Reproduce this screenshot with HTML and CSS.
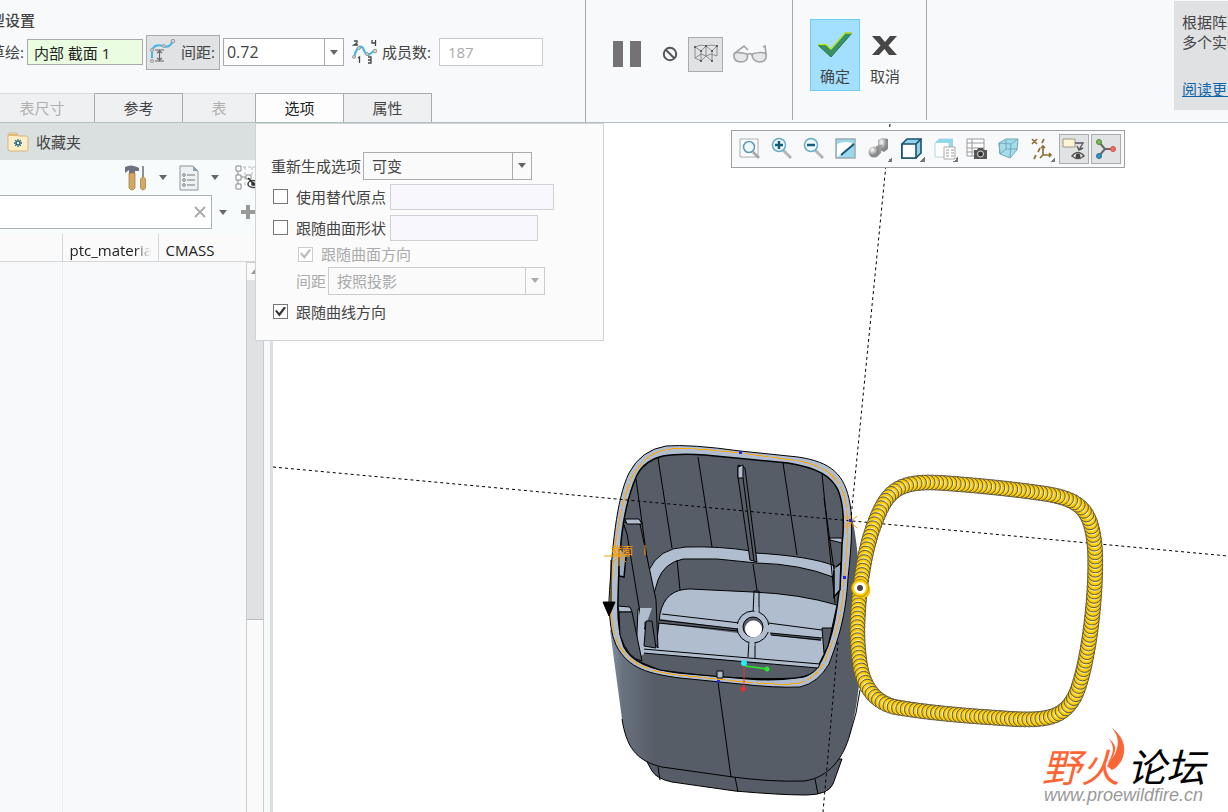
FILE: index.html
```html
<!DOCTYPE html>
<html lang="zh-CN">
<head>
<meta charset="utf-8">
<title>阵列</title>
<link rel="stylesheet" href="styles.css">
</head>
<body>
<header class="ribbon">
  <section class="group settings">
    <h2 class="settings-title">型设置</h2>
    <div class="settings-row">
      <label class="clipped" for="sketch">草绘:</label>
      <input class="field sketch" id="sketch" value="内部 截面 1">
      <button class="spacing-toggle" type="button">
        <svg class="icon" viewBox="0 0 26 26"><path d="M2 19V12Q4 4 13 7Q19 10 23 2" fill="none" stroke="#45b5e8" stroke-width="2"/><g fill="#d5d8da" stroke="#999"><circle cx="2" cy="11" r="1.5"/><circle cx="2" cy="22" r="1.5"/><circle cx="14" cy="7" r="1.5"/><circle cx="23" cy="2" r="1.8"/></g><path d="M5 11H14M5 22H14M9.500 12V21M7 14l2.500-2L12 14M7 19l2.500 2L12 19" fill="none" stroke="#666" stroke-width="1.200"/></svg>
        <span>间距:</span>
      </button>
      <span class="combo spacing-combo"><input class="combo-control" aria-label="间距" value="0.72"><span class="combo-arrow"></span></span>
      <svg class="icon members-icon" viewBox="0 0 26 26"><path d="M2 18Q6 4 11 9Q14 18 18 15L23 11" fill="none" stroke="#45b5e8" stroke-width="2.200"/><g fill="#d5d8da" stroke="#999"><circle cx="2" cy="18" r="1.500"/><circle cx="7" cy="9" r="1.500"/><circle cx="15" cy="15" r="1.500"/><circle cx="23" cy="12" r="1.800"/></g><path d="M2 2h3v2L2 6h4M20 1v3h4M23.500 1v6M6 19l1.500-1v6M16 18h3v6h-3M16 21h3" fill="none" stroke="#444" stroke-width="1.300"/></svg>
      <label for="count">成员数:</label>
      <input class="field count" id="count" value="187" disabled>
    </div>
    <nav class="tabs">
      <button class="tab tab-first" type="button" disabled>表尺寸</button>
      <button class="tab tab-wide" type="button">参考</button>
      <button class="tab tab-short" type="button" disabled>表</button>
      <button class="tab tab-wide tab-active" type="button">选项</button>
      <button class="tab tab-wide" type="button">属性</button>
    </nav>
  </section>
  <section class="group preview">
    <button class="plain" type="button" aria-label="暂停"><svg width="30" height="28" viewBox="0 0 30 28"><path d="M1 1h10v26H1zM18 1h11v26H18z" fill="#747276"/></svg></button>
    <button class="plain no-preview" type="button" aria-label="无预览"><svg width="16" height="16" viewBox="0 0 16 16"><circle cx="8" cy="8" r="6.200" fill="none" stroke="#555" stroke-width="2"/><path d="M4 4l8 8" stroke="#555" stroke-width="2"/></svg></button>
    <button class="pressed" type="button" aria-label="特征预览"><svg width="26" height="22" viewBox="0 0 26 22"><path d="M2 4L8 2L13 3L8 8L2 4V15L8 18V8M13 3L18 2L24 3L19 8L13 3V13L19 18V8M24 3V13M2 15L8 11L13 13L8 18M13 13L18 11L24 13" fill="none" stroke="#777a7c" stroke-width="0.800"/><path d="M1 4h2M12 3h2M23 3h2M7 18h2M18 18h2M7 8h2M18 8h2" stroke="#444" stroke-width="1.500"/></svg></button>
    <button class="plain" type="button" aria-label="校验"><svg width="36" height="22" viewBox="0 0 36 22"><path d="M2 11Q3 8 15 11C17 17 13 19 8 19Q1 18 2 11M20 11Q30 8 34 11C35 18 31 19 27 19Q20 18 20 11M15 12Q18 9 20 12" fill="#e6e8e8" stroke="#a0a2a3" stroke-width="1.600"/><path d="M3 10L12 3L16 7M34 11L33 3L31 4" fill="none" stroke="#a0a2a3" stroke-width="1.600"/></svg></button>
  </section>
  <section class="group confirm">
    <button class="action action-ok" type="button"><svg width="38" height="34" viewBox="0 0 38 34"><path d="M2 17H10L15 21L29 5H36L15 29Z" fill="#369262" stroke="#26734e"/><path d="M2 16.500H10L15 21L29 5H36" fill="none" stroke="#bde52d" stroke-width="1.500"/></svg><span>确定</span></button>
    <button class="action" type="button"><svg width="38" height="34" viewBox="0 0 38 34"><path d="M6 8H14L19 14L24 8H31L22.500 17.500L31 27H23L18.500 21L13 27H6L14.500 17.500Z" fill="#474747"/></svg><span>取消</span></button>
  </section>
  <aside class="help">
    <p>根据阵列<br>多个实例</p>
    <a href="#more">阅读更多</a>
  </aside>
</header>

<main class="workspace">
  <aside class="side">
    <h2 class="side-title"><svg width="22" height="20" viewBox="0 0 22 20"><path d="M1 4Q1 1 3 1H9Q11 1 11 4H19Q21 4 21 6V17Q21 19 19 19H3Q1 19 1 17Z" fill="#ffedc6" stroke="#d5b47e"/><path d="M2 4V2H10V4Z" fill="#dfb977"/><path d="M11 7v8M7 11h8M8.200 8.200l5.600 5.600M13.800 8.200l-5.600 5.600" stroke="#1a6686" stroke-width="1.300"/><circle cx="11" cy="11" r="1.200" fill="#fff"/></svg>收藏夹</h2>
    <div class="side-tools">
      <button class="plain" type="button" aria-label="设置"><svg width="22" height="26" viewBox="0 0 22 26"><path d="M0 2Q6-1 12 2L14 3V6H10V8H4V5L0 8Z" fill="#6d7180"/><path d="M4 8H10V23Q7 27 4 23Z" fill="#d6a963" stroke="#9a753f" stroke-width=".7"/><path d="M17 1H19V12H17Z" fill="#8b8f98"/><path d="M15.500 14Q18 10 20.500 14V23Q18 27 15.500 23Z" fill="#d6a963" stroke="#9a753f" stroke-width=".7"/></svg></button>
      <i class="caret"></i>
      <button class="plain" type="button" aria-label="显示"><svg width="20" height="26" viewBox="0 0 20 26"><path d="M1 1H14L19 6V25H1Z" fill="#edf1f3" stroke="#8c959c"/><path d="M14 1V6H19Z" fill="#8ba1ad"/><path d="M8 10h8M8 15h8M8 20h8" stroke="#777"/><g fill="#fff" stroke="#777"><circle cx="5" cy="10" r="1.300"/><circle cx="5" cy="15" r="1.300"/><circle cx="5" cy="20" r="1.300"/></g></svg></button>
      <i class="caret"></i>
      <button class="plain tree" type="button" aria-label="树列"><svg width="26" height="26" viewBox="0 0 26 26"><path d="M3 6V20M6 12H12" fill="none" stroke="#888"/><path d="M8 2H24M10 2V22M17 2V12" fill="none" stroke="#bbb" stroke-dasharray="3 2"/><g fill="#fff" stroke="#888"><path d="M1 1h5v5H1zM1 10h5v5H1zM1 19h5v5H1zM11 10h5v4h-5z"/></g><ellipse cx="18" cy="19" rx="5" ry="3.500" fill="#fff" stroke="#444" stroke-width="1.500"/><circle cx="18" cy="19" r="2" fill="#444"/><path d="M13 13l9 9" stroke="#222" stroke-width="1.500"/></svg></button>
    </div>
    <div class="search">
      <span class="search-box"><input class="search-input" aria-label="搜索"><button class="plain" type="button" aria-label="清除"><svg width="12" height="12" viewBox="0 0 12 12"><path d="M1 1l10 10M11 1L1 11" stroke="#aaa" stroke-width="1.800"/></svg></button></span>
      <i class="caret"></i>
      <button class="plain" type="button" aria-label="添加"><svg width="14" height="14" viewBox="0 0 14 14"><path d="M5 0h4v5h5v4H9v5H5V9H0V5h5z" fill="#999"/></svg></button>
    </div>
    <table class="columns">
      <thead><tr><th class="col-name"></th><th class="col-material"><span>ptc_material</span></th><th>CMASS</th></tr></thead>
    </table>
    <div class="list"><div class="list-name"></div><div class="list-rest"></div>
      <div class="scroll"><span class="scroll-up"></span><span class="scroll-thumb"></span></div>
    </div>
  </aside>

  <section class="canvas">
    <svg class="scene" viewBox="273 123 955 689" preserveAspectRatio="xMinYMin slice">
      <defs>
        <linearGradient id="shell" x1="0" x2="1"><stop offset="0" stop-color="#8592a1"/><stop offset=".05" stop-color="#68727e"/><stop offset=".18" stop-color="#565d67"/></linearGradient>
        <radialGradient id="bead"><stop offset="0" stop-color="#fff"/><stop offset=".5" stop-color="#fff"/><stop offset=".64" stop-color="#ffd81f"/><stop offset=".85" stop-color="#f9c800"/><stop offset="1" stop-color="#d9a800"/></radialGradient>
        <linearGradient id="flame" x1="0" x2="1"><stop offset="0" stop-color="#ff6432"/><stop offset="1" stop-color="#f7683b"/></linearGradient>
      </defs>
      <path d="M646 760L652 771Q657 779 672 782L735 791Q780 795 806 795Q828 795 833 784L842 759Z" fill="#565d67" stroke="#000"/>
      <path d="M610 630L622 719C626 745 635 761 662 767L733 777Q770 782 804 781C829 778 844 757 850 734C860 700 862 660 861 610Q859 545 851 513L835 590Z" fill="url(#shell)"/>
      <path d="M622 719C626 745 635 761 662 767L733 777Q770 782 804 781C829 778 844 757 850 734Q857 714 860 690M658 767L660 780M735 777L738 792M815 779L818 794M718 682L731 777" fill="none" stroke="#000"/>
      <path d="M609 600C612 550 616 500 629 473Q641 450 666 446Q690 444 740 451L798 457C831 462 845 474 850 504Q854 525 848 578C846 616 838 640 829 664Q818 683 800 687Q775 688 740 684L680 678C650 674 628 669 616 645Q609 630 609 600Z" fill="#b0bdce" stroke="#000"/>
      <path d="M618 600C619 550 622 508 637 475Q645 460 663 456Q680 453 705 455L788 463C818 468 831 476 838 490Q846 510 842 545C841 590 835 630 826 650Q818 673 803 677Q777 681 750 679L680 673C650 670 631 661 624 647Q617 629 618 600Z" fill="#565d67" stroke="#000" stroke-width="1.500"/>
      <path d="M660 614Q665 589 690 589L753 592Q800 594 837 605L828 646L818 666L643 650L636 656L638 609H652L657 640Z" fill="#b0bdce" stroke="#000"/>
      <path d="M649 570Q659 548 686 547Q720 546 751 551L755 553Q810 556 835 566L833 577Q800 564 757 563L717 559H683Q664 563 658 580L652 600Z" fill="#b0bdce" stroke="#000"/>
      <path d="M638 650L643 652L818 667Q813 676 795 678Q740 681 660 670L640 662Z" fill="#565d67" stroke="#000"/>
      <path d="M643 649L820 664L818 668L643 653Z" stroke="#000" fill="#b0bdce"/>
      <path d="M636 479L652 595M658 458L672 548M698 457L712 547M783 463L797 555M822 474L835 603M677 560L680 590M753 564L757 590M824 498L834 570" fill="none" stroke="#000"/>
      <path d="M738 465L745 468L757 562L750 560L738 477Z" fill="#565d67" stroke="#000"/><path d="M743 478L754 561" stroke="#000"/>
      <path d="M738 467L743 465V478H738Z" fill="#b0bdce" stroke="#000"/>
      <path d="M623 522L640 524L656 600L658 648L642 625L627 534Z" fill="#565d67" stroke="#000"/>
      <path d="M640 608H652L647 622H644V654L638 658Z" fill="#b0bdce"/>
      <path d="M625 519H639L642 524H627ZM618 606L630 607L632 612H619ZM830 538H842V543L830 540Z" fill="#b0bdce" stroke="#000"/>
      <path d="M619 612H632L642 661Q628 659 620 635Z" fill="#565d67" stroke="#000"/>
      <path d="M646 621H652L656 648L644 646ZM822 628H832L828 646L824 653Z" fill="#565d67" stroke="#000"/>
      <path d="M660 619L738 629V633L658 623ZM771 633L821 638V641L770 635Z" fill="#565d67"/>
      <path d="M662 614L740 623M659 620L738 629M658 623L738 631M768 623L822 630M770 633L822 638M771 635L821 640M754 591H759V612L753 614ZM750 641H755V658M749 641L748 657" fill="none" stroke="#000"/>
      <circle cx="753" cy="627" r="16" fill="#b0bdce" stroke="#000"/><path d="M736 624h8v4h-8zM764 625h7v7h-7zM754.500 607h4v8h-4zM749.500 638h5v8h-5z" fill="#b0bdce"/>
      <circle cx="753" cy="627" r="10" fill="#565d67" stroke="#000"/><circle cx="753.500" cy="629" r="8.500" fill="#fff"/>
      <path d="M619 548V576L624 577L626 557M836 567L841 563L840 590L834 597V570" fill="#9baabd" stroke="#000" stroke-width="1.500"/>
      <path d="M717 678V671H723V678Z" fill="#b0bdce" stroke="#000"/>
      <path class="rim-curve" d="M611 610C611 558 619 507 632 477Q646 451 671 449Q688 447 740 453L793 460C829 465 842 480 846 504Q850 531 844 581C843 617 834 638 825 661Q813 684 790 684Q775 685 735 681L679 675C646 672 626 661 618 643Q612 630 611 610Z"/>
      <g class="axis"><path d="M273 467L1228 556"/><path d="M890 124L851 518M838 642L823 812"/></g>
      <path d="M604 556H630M619 547V566M613 550L626 562M626 550L613 562M850 516V528M844 516L857 528M857 516L844 528M645 545V555" fill="none" stroke="#ff9e00"/>
      <text class="section-label" x="611" y="555">截面</text>
      <path d="M611 560V602M603 602H615L609 616Z" fill="#000" stroke="#000"/>
      <path d="M739 451h3v3h-3zM717 680h3v3h-3zM843 576h3v3h-3zM849 519h3v3h-3z" fill="#2626dd"/>
      <path d="M744 664V689" stroke="#e33"/><path d="M745 666L767 669" stroke="#2e2" stroke-width="1.500"/><circle cx="744" cy="663" r="3" fill="#25eef5"/><circle cx="767" cy="669" r="2.500" fill="#2be62b"/><circle cx="743" cy="689" r="2.500" fill="#ee2e2e"/>
      <path id="track" fill="none" d="M860 588C857 620 856 640 860 665Q866 700 895 707Q935 714 1000 718C1048 722 1063 718 1075 696C1088 668 1097 595 1095 550C1092 510 1081 500 1047 494Q1000 487 943 483C899 480 888 490 876 520C866 545 863 568 860 588Z"/>
      <g id="beads"></g>
      <circle cx="862" cy="590" r="8.500" fill="#f5c400"/><circle cx="860" cy="588" r="8.500" fill="#ffd000" stroke="#b78b00"/><circle cx="860" cy="588" r="4.500" fill="#454545" stroke="#fff" stroke-width="3"/>
      <text class="logo logo-fire" x="1042" y="782">野火</text><text class="logo" x="1127" y="782">论坛</text>
      <path d="M1111 727C1118 735 1120 742 1115 754L1107 766L1112 770Q1120 766 1123 757C1127 744 1121 735 1111 727ZM1108 738Q1116 746 1111 757L1107 765Q1116 755 1115 747Q1114 742 1108 738Z" fill="url(#flame)"/>
      <text class="logo-url" x="1044" y="801">www.proewildfire.cn</text>
    </svg>

    <div class="view-bar">
      <button class="tool" type="button" aria-label="重新调整"><svg viewBox="0 0 24 24"><path d="M2 2h18v18H2z" fill="#fff" stroke="#aaa"/><path d="M15 15l6 6" stroke="#aaa" stroke-width="3"/><circle cx="11" cy="10" r="5.500" fill="#effaff" stroke="#5c9cba" stroke-width="1.600"/></svg></button>
      <button class="tool" type="button" aria-label="放大"><svg viewBox="0 0 24 24"><path d="M13 13l8 8" stroke="#b5b5b5" stroke-width="3"/><circle cx="9" cy="8" r="6.500" fill="#eefaff" stroke="#6aabc5" stroke-width="1.500"/><path d="M5 8h8M9 4v8" stroke="#125c80" stroke-width="2.500"/></svg></button>
      <button class="tool" type="button" aria-label="缩小"><svg viewBox="0 0 24 24"><path d="M13 13l8 8" stroke="#b5b5b5" stroke-width="3"/><circle cx="9" cy="8" r="6.500" fill="#eefaff" stroke="#6aabc5" stroke-width="1.500"/><path d="M5 8h8" stroke="#125c80" stroke-width="2.500"/></svg></button>
      <button class="tool" type="button" aria-label="重画"><svg viewBox="0 0 24 24"><path d="M2 2h19v19H2z" fill="#9bd8ec" stroke="#9cabb2" stroke-width="1.500"/><path d="M3 7Q13 3 19 7L9 17L3 20Z" fill="#fff"/><path d="M7 18L20 7" stroke="#13577a" stroke-width="2"/></svg></button>
      <button class="tool menu" type="button" aria-label="渲染"><svg viewBox="0 0 24 24"><defs><radialGradient id="ball" cx=".35" cy=".3"><stop stop-color="#fff"/><stop offset="1" stop-color="#888"/></radialGradient></defs><path d="M11 3l4-2 6 1v10l-4 3-6-3z" fill="url(#ball)"/><path d="M9 9l6-1-1 8-4 4z" fill="#999"/><circle cx="7" cy="15" r="5.500" fill="url(#ball)"/></svg></button>
      <button class="tool menu" type="button" aria-label="显示样式"><svg viewBox="0 0 24 24"><path d="M2 7L7 2H21V16L16 21H2Z" fill="#93d2e8" stroke="#17536f" stroke-width="1.600"/><path d="M2 7H16V21H2ZM16 7L21 2" fill="#fff" stroke="#17536f" stroke-width="1.600"/></svg></button>
      <button class="tool menu" type="button" aria-label="已保存方向"><svg viewBox="0 0 24 24"><path d="M2 6L6 2H20L16 6V20H2Z" fill="#fff" stroke="#b9d5df"/><path d="M2 6L6 2H20L16 6ZM16 6l4-4v13l-4 5z" fill="#91d8ed"/><path d="M11 10h11v12H11z" fill="#fff" stroke="#aaa"/><path d="M13 13h3m2 0h3m-8 3h3m2 0h3m-8 3h3m2 0h3" stroke="#999"/></svg></button>
      <button class="tool" type="button" aria-label="视图管理器"><svg viewBox="0 0 24 24"><path d="M2 2h17v17H2zM2 6h17M2 11h17M2 15h17M7 2v17" fill="#fff" stroke="#999"/><path d="M9 13h3l1-2h5l1 2h3v9H9z" fill="#555"/><circle cx="15.500" cy="17" r="3" fill="#333" stroke="#ddd"/></svg></button>
      <button class="tool" type="button" aria-label="透视图"><svg viewBox="0 0 24 24"><path d="M2 6L9 2H21L20 13L13 21L3 17Z" fill="#a6dbea" stroke="#76a9bc"/><path d="M2 6L14 7L21 2M14 7L13 21M2 6L3 17L9 12H20M9 2V12" fill="none" stroke="#6fabc3"/></svg></button>
      <button class="tool menu" type="button" aria-label="基准显示"><svg viewBox="0 0 24 24"><path d="M2 2l5 5M7 2L2 7M14 2l-2 4M10 11l-2 4M6 18l-2 4M13 9v9h8M13 18l-3 3M11 11l2-2 2 2M19 16l2 2-2 2" fill="none" stroke="#8e7137" stroke-width="1.700"/></svg></button>
      <button class="tool tool-on" type="button" aria-label="注释显示"><svg viewBox="0 0 24 24"><path d="M1 2h12v8H1z" fill="#fff3d3" stroke="#9c9784"/><path d="M13 6h8l-4 7M15 9l2 4 4-2" fill="none" stroke="#555" stroke-width="1.400"/><path d="M10 19q6-7 12 0q-6 5-12 0z" fill="#fff" stroke="#555" stroke-width="1.500"/><circle cx="16" cy="19" r="2.500" fill="#444"/></svg></button>
      <button class="tool tool-on" type="button" aria-label="旋转中心"><svg viewBox="0 0 24 24"><path d="M5 5l6 7-6 7M11 12h9" fill="none" stroke="#666" stroke-width="2"/><circle cx="5" cy="5" r="2.500" fill="#75bd5b" stroke="#4a8b3a"/><circle cx="5" cy="19" r="2.500" fill="#3a91bd" stroke="#286f96"/><circle cx="19" cy="12" r="2.500" fill="#ef7269" stroke="#cc5149"/></svg></button>
    </div>
  </section>

  <form class="options">
    <div class="option"><label for="regen">重新生成选项</label><span class="combo regen"><select class="combo-control" id="regen"><option>可变</option></select><span class="combo-arrow"></span></span></div>
    <div class="option"><input class="check" type="checkbox" id="origin"><label for="origin">使用替代原点</label><input class="picker picker-long" aria-label="替代原点"></div>
    <div class="option"><input class="check" type="checkbox" id="surface"><label for="surface">跟随曲面形状</label><input class="picker" aria-label="曲面"></div>
    <div class="option option-small"><input class="check" type="checkbox" id="surface-dir" checked disabled><label for="surface-dir">跟随曲面方向</label></div>
    <div class="option option-nested"><label for="projection">间距</label><span class="combo projection"><select class="combo-control" id="projection" disabled><option>按照投影</option></select><span class="combo-arrow"></span></span></div>
    <div class="option"><input class="check" type="checkbox" id="curve" checked><label for="curve">跟随曲线方向</label></div>
  </form>
</main>
<script src="pattern.js"></script>
</body>
</html>
```

FILE: styles.css
```css
* { box-sizing: border-box; }
body, h2, p { margin: 0; }
body {
  display: flex;
  flex-direction: column;
  height: 100vh;
  overflow: hidden;
  background: #fff;
  color: #444;
  font: 15px/20px "Open Sans", "Noto Sans CJK SC", sans-serif;
}
h2 { font-size: 15px; font-weight: 400; }
button, input, select { font: inherit; color: inherit; }
input, select { border-radius: 0; outline: 0; }
button { padding: 0; cursor: default; }
svg { display: block; flex: none; }
label { white-space: nowrap; }
.plain { border: 0; background: none; }

/* ribbon */
.ribbon {
  display: flex;
  flex: none;
  height: 123px;
  background: #f8f9fb;
  border-bottom: 1px solid #b0bfc0;
}
.group { flex: none; border-right: 1px solid #a5a8aa; margin-bottom: 2px; }
.settings { display: flex; flex-direction: column; width: 586px; padding-top: 10px; margin-bottom: 0; }
.settings-title { margin-left: -10px; font-weight: 500; }
.settings-row { display: flex; align-items: center; height: 44px; }
.clipped { margin-left: -10px; }
.field { height: 28px; padding: 0 8px; border: 1px solid #c8ccd0; background: #fff; }
.sketch { width: 116px; height: 26px; margin: 0 3px 0 3px; padding: 0 6px; border-color: #aaa; background: #eafde0; color: #222; }
.spacing-toggle { display: flex; align-items: center; gap: 5px; width: 74px; height: 35px; padding-left: 3px; border: 1px solid #a9abad; background: #e0e2e4; white-space: nowrap; }
.icon { width: 26px; height: 26px; }
.members-icon { margin: 0 4px 0 8px; }
.count { width: 104px; margin-left: 8px; color: #aaa; }

.combo { display: inline-grid; grid-template-columns: 1fr 19px; height: 28px; border: 1px solid #a9abad; background: #fafafa; }
.combo-control { grid-area: 1 / 1 / 2 / 3; width: 100%; min-width: 0; height: 26px; padding: 0 8px; border: 0; background: none; appearance: none; opacity: 1; }
.combo-arrow { grid-area: 1 / 2; display: grid; place-items: center; border-left: 1px solid #a9abad; pointer-events: none; }
.combo-arrow::after, .caret { content: ""; flex: none; border: solid transparent; border-width: 5px 4px 0; border-top-color: #666; }
.combo:has(:disabled) { border-color: #ccc; color: #aaa; }
.combo:has(:disabled) .combo-arrow { border-color: #ccc; }
.combo:has(:disabled) .combo-arrow::after { border-top-color: #aaa; }
.spacing-combo { width: 121px; margin-left: 3px; background: #fff; }
.spacing-combo .combo-control { padding: 0 3px; font-size: 16px; }

.tabs { display: flex; height: 29px; margin-top: auto; }
.tab { border: 1px solid #a9abad; border-width: 1px 1px 0 0; background: #eff0f2; }
.tab:disabled { color: #b0b0b0; border-top-color: #d9dbdd; }
.tab-first { width: 105px; margin-left: -10px; }
.tab-wide { width: 88px; }
.tab-short { width: 73px; }
.tab-active { background: #fdfdfd; color: #222; }

.preview { display: flex; align-items: center; width: 207px; padding: 0 0 12px 26px; }
.no-preview { margin: 0 10px 0 20px; }
.pressed { display: grid; place-items: center; width: 35px; height: 35px; margin-right: 9px; border: 1px solid #a9abad; background: #e0e2e4; }
.confirm { display: flex; width: 134px; padding: 19px 0 0 17px; }
.action { display: flex; flex-direction: column; align-items: center; gap: 4px; width: 50px; height: 72px; padding-top: 8px; border: 1px solid transparent; background: none; }
.action-ok { border-color: #70cdfb; background: #a3e0ff; }
.help { width: 54px; height: 109px; margin: 1px 0 0 auto; padding: 11px 0 0 8px; overflow: hidden; background: #e0e1e3; white-space: nowrap; }
.help a { display: inline-block; margin-top: 27px; color: #0f66aa; }

/* workspace */
.workspace { position: relative; display: flex; flex: 1; min-height: 0; }
.side { display: flex; flex: none; flex-direction: column; width: 273px; border-right: 3px solid #dae0df; background: #f8fbfc; }
.side-title { display: flex; align-items: center; gap: 7px; height: 37px; padding-left: 7px; background: #dae0df; }
.side-tools { display: flex; align-items: center; gap: 12px; height: 35px; padding-left: 125px; overflow: hidden; }
.tree { margin-left: 4px; }
.search { display: flex; align-items: center; gap: 7px; height: 34px; }
.search .caret { margin-right: 7px; }
.search-box { display: flex; align-items: center; width: 212px; height: 34px; padding-right: 5px; border: 1px solid #a9b4b6; border-left: 0; background: #fff; }
.search-input { flex: 1; min-width: 0; border: 0; background: none; }
.columns { width: 100%; margin-top: 5px; table-layout: fixed; border-collapse: collapse; border-bottom: 1px solid #d5d8da; background: #fafafa; color: #222; }
.columns th { height: 27px; padding: 5px 7px 0; font-weight: 400; text-align: left; overflow: hidden; white-space: nowrap; }
.columns span { display: block; overflow: hidden; mask-image: linear-gradient(90deg, #000 80%, transparent); }
.columns .col-name { width: 62px; border-right: 1px solid #d5d8da; }
.columns .col-material { width: 96px; border-right: 1px solid #d5d8da; }
.list { display: flex; flex: 1; min-height: 0; background: #f8f9fb; }
.list-name { width: 63px; border-right: 1px solid #eceef0; }
.list-rest { flex: 1; }
.scroll { display: flex; flex-direction: column; width: 18px; margin-right: 6px; border: 1px solid #ccc; border-bottom: 0; background: #fafafa; }
.scroll-up { display: grid; place-items: center; height: 17px; }
.scroll-up::after { content: ""; border: solid transparent; border-width: 0 4px 5px; border-bottom-color: #999; }
.scroll-thumb { height: 62%; border-bottom: 1px solid #bbb; background: #dfe1e4; }

.canvas { position: relative; flex: 1; min-width: 0; overflow: hidden; background: #fff; }
.scene { width: 100%; height: 100%; }
.rim-curve { fill: none; stroke: #ffa600; stroke-width: 1; stroke-dasharray: 24 2; shape-rendering: crispEdges; }
.axis { fill: none; stroke: #000; stroke-dasharray: 3 3; }
.section-label { fill: #ff9e00; font-size: 11px; }
.logo { fill: #000; font: italic 400 39px/1 "Noto Sans CJK SC", sans-serif; }
.logo-fire { fill: #ff6432; }
.logo-url { fill: #999; font: italic 18px "Liberation Sans", sans-serif; }
.view-bar { position: absolute; top: 7px; right: 103px; display: flex; gap: 2px; padding: 3px; border: 1px solid #a0a0a0; background: #f8f9fb; }
.tool { display: grid; place-items: center; width: 30px; height: 30px; border: 1px solid transparent; background: none; }
.tool svg { width: 24px; height: 24px; }
.tool-on { border-color: #a9abad; background: #e0e2e4; }
.menu { width: 31px; background: linear-gradient(135deg, transparent 50%, #777 50%) right 1px bottom 1px / 5px 5px no-repeat; }

/* options panel */
.options { position: absolute; top: 0; left: 255px; display: flex; flex-direction: column; gap: 4px; width: 349px; padding: 28px 16px 15px 15px; border: 1px solid #d0d3d4; background: #fbfbfb; }
.option { display: flex; align-items: center; gap: 2px; height: 27px; }
.option-small { height: 18px; padding-left: 25px; color: #aaa; }
.option-nested { padding-left: 25px; color: #aaa; }
.regen { width: 169px; }
.projection { width: 217px; }
.check { display: grid; place-items: center; flex: none; width: 15px; height: 15px; margin: 0 6px 0 2px; border: 1px solid #777; background: #fff; appearance: none; }
.check:checked::after { content: ""; width: 11px; height: 10px; background: #333; clip-path: polygon(0 46%, 16% 34%, 38% 64%, 84% 0, 100% 12%, 40% 100%); }
.check:disabled { border-color: #ccc; }
.check:disabled::after { background: #bbb; }
.picker { width: 148px; height: 26px; margin-left: 2px; border: 1px solid #d0d0d4; background: #f9f7fe; }
.picker-long { width: 164px; }
```

FILE: pattern.js
```js
const track = document.getElementById("track");
const beads = document.getElementById("beads");
const members = 187;
const step = track.getTotalLength() / members;

for (let i = 0; i < members; i++) {
  const point = track.getPointAtLength(i * step);
  const bead = document.createElementNS("http://www.w3.org/2000/svg", "circle");
  bead.setAttribute("cx", point.x);
  bead.setAttribute("cy", point.y);
  bead.setAttribute("r", 7.5);
  bead.setAttribute("fill", "url(#bead)");
  bead.setAttribute("stroke", "#5c5a4c");
  beads.append(bead);
}
```
